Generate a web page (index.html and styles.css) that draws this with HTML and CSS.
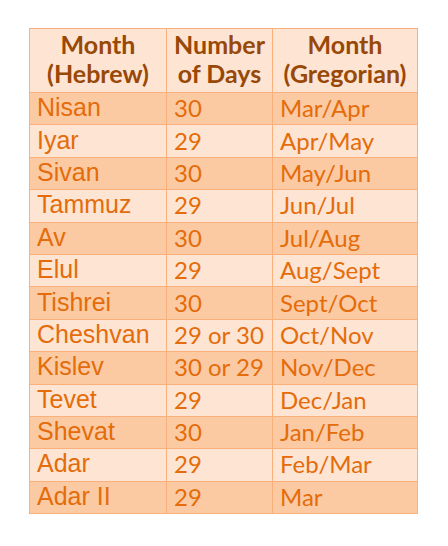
FILE: index.html
```html
<!DOCTYPE html>
<html>
<head>
<meta charset="utf-8">
<link rel="stylesheet" href="styles.css">
</head>
<body>
<table class="cal">
  <thead>
    <tr>
      <th class="c1">Month<br>(Hebrew)</th>
      <th class="c2">Number<br>of Days</th>
      <th class="c3">Month<br>(Gregorian)</th>
    </tr>
  </thead>
  <tbody>
    <tr class="dark"><td class="heb">Nisan</td><td>30</td><td>Mar/Apr</td></tr>
    <tr class="light"><td class="heb">Iyar</td><td>29</td><td>Apr/May</td></tr>
    <tr class="dark"><td class="heb">Sivan</td><td>30</td><td>May/Jun</td></tr>
    <tr class="light"><td class="heb">Tammuz</td><td>29</td><td>Jun/Jul</td></tr>
    <tr class="dark"><td class="heb">Av</td><td>30</td><td>Jul/Aug</td></tr>
    <tr class="light"><td class="heb">Elul</td><td>29</td><td>Aug/Sept</td></tr>
    <tr class="dark"><td class="heb">Tishrei</td><td>30</td><td>Sept/Oct</td></tr>
    <tr class="light"><td class="heb">Cheshvan</td><td>29 or 30</td><td>Oct/Nov</td></tr>
    <tr class="dark"><td class="heb">Kislev</td><td>30 or 29</td><td>Nov/Dec</td></tr>
    <tr class="light"><td class="heb">Tevet</td><td>29</td><td>Dec/Jan</td></tr>
    <tr class="dark"><td class="heb">Shevat</td><td>30</td><td>Jan/Feb</td></tr>
    <tr class="light"><td class="heb">Adar</td><td>29</td><td>Feb/Mar</td></tr>
    <tr class="dark"><td class="heb">Adar II</td><td>29</td><td>Mar</td></tr>
  </tbody>
</table>
</body>
</html>
```
FILE: styles.css
```css
html, body {
  margin: 0;
  padding: 0;
  background: #ffffff;
}
body {
  padding: 28px 0 0 29px;
}
.cal {
  border-collapse: collapse;
  table-layout: fixed;
}
.cal th, .cal td {
  border: 1px solid #f9b07a;
  white-space: nowrap;
}
.c1 { width: 136px; }
.c2 { width: 105px; }
.c3 { width: 144px; }
.cal th {
  background: #fde4d3;
  color: #984807;
  font-family: "Lato", "Open Sans", sans-serif;
  font-weight: bold;
  font-size: 25px;
  line-height: 29px;
  height: 60px;
  padding: 0 0 3px 0;
  text-align: center;
  vertical-align: middle;
}
.cal td {
  height: 28.4px;
  padding: 1px 0 2px 7px;
  color: #e46c0a;
  font-family: "Lato", "Open Sans", sans-serif;
  font-size: 24px;
  line-height: 28px;
  text-align: left;
  vertical-align: middle;
}
.cal td.heb {
  font-family: "Liberation Sans", Arial, sans-serif;
  font-size: 25px;
  padding: 0 0 3px 7px;
}
.dark td { background: #fbcaa3; }
.light td { background: #fde4d3; }
```
